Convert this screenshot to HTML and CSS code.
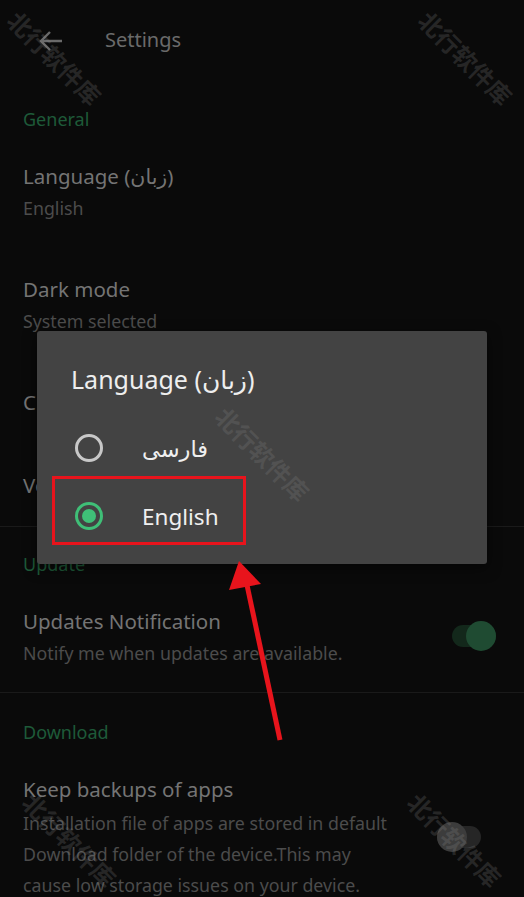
FILE: index.html
```html
<!DOCTYPE html>
<html lang="en">
<head>
    <meta charset="UTF-8">
    <meta name="viewport" content="width=device-width, initial-scale=1.0">
    <title>Settings</title>
    <link rel="stylesheet" href="styles.css">
</head>
<body>
    <div class="screen">
        <header class="topbar">
            <svg class="back" width="26" height="24" viewBox="0 0 26 24">
                <path d="M24 12H3M12 3L3 12l9 9" fill="none" stroke="#6a6a6a" stroke-width="2.4"/>
            </svg>
            <h1>Settings</h1>
        </header>

        <section class="group">
            <h2>General</h2>
            <div class="item">
                <div class="texts">
                    <div class="title">Language (زبان)</div>
                    <div class="sub">English</div>
                </div>
            </div>
            <div class="item">
                <div class="texts">
                    <div class="title">Dark mode</div>
                    <div class="sub">System selected</div>
                </div>
            </div>
            <div class="item">
                <div class="texts">
                    <div class="title">Clear cache</div>
                </div>
            </div>
            <div class="item">
                <div class="texts">
                    <div class="title">Version</div>
                </div>
            </div>
        </section>

        <section class="group">
            <h2>Update</h2>
            <div class="item">
                <div class="texts">
                    <div class="title">Updates Notification</div>
                    <div class="sub">Notify me when updates are available.</div>
                </div>
                <span class="switch on"><span class="knob"></span></span>
            </div>
        </section>

        <section class="group last">
            <h2>Download</h2>
            <div class="item">
                <div class="texts narrow">
                    <div class="title">Keep backups of apps</div>
                    <div class="sub long">Installation file of apps are stored in default Download folder of the device.This may cause low storage issues on your device.</div>
                </div>
                <span class="switch off"><span class="knob"></span></span>
            </div>
        </section>

        <div class="dialog">
            <div class="dialog-title">Language (زبان)</div>
            <div class="option">
                <span class="radio"></span>
                <span class="label">فارسی</span>
            </div>
            <div class="option">
                <span class="radio checked"></span>
                <span class="label">English</span>
            </div>
        </div>

        <div class="mark-box"></div>
        <svg class="arrow" width="524" height="897" viewBox="0 0 524 897">
            <line x1="280" y1="740" x2="247" y2="585" stroke="#e8141c" stroke-width="5"/>
            <polygon points="239,561 229,590 261,584" fill="#e8141c"/>
        </svg>

        <div class="wm wm1">北行软件库</div>
        <div class="wm wm2">北行软件库</div>
        <div class="wm wm3">北行软件库</div>
        <div class="wm wm4">北行软件库</div>
        <div class="wm wm5">北行软件库</div>
    </div>
</body>
</html>
```

FILE: styles.css
```css
body {
    margin: 0;
    background: #0a0a0a;
    font-family: "Noto Sans", "DejaVu Sans", sans-serif;
}

.screen {
    position: relative;
    width: 524px;
    height: 897px;
    overflow: hidden;
    background: #0a0a0a;
}

.topbar {
    height: 80px;
    display: flex;
    align-items: center;
    padding-left: 38px;
    gap: 41px;
}

.topbar h1 {
    margin: 0;
    font-size: 20px;
    font-weight: normal;
    color: #6a6a6a;
    margin-top: -2px;
}

.back {
    display: block;
    margin-top: 2px;
}

.group {
    border-bottom: 1px solid #1a1a1a;
}

.group.last {
    border-bottom: none;
}

.group h2 {
    margin: 0;
    padding: 27px 23px 3px;
    font-size: 18px;
    line-height: 24px;
    font-weight: normal;
    color: #1e5a39;
}

.group + .group h2 {
    padding-top: 25px;
}

.group.last h2 {
    padding-top: 27px;
}

.item {
    display: flex;
    align-items: center;
    justify-content: space-between;
    padding: 25px 28px 24px 23px;
}

.texts.narrow {
    width: 378px;
}

.title {
    font-size: 20.5px;
    line-height: 34px;
    color: #747474;
}

.sub {
    font-size: 17.8px;
    line-height: 30px;
    color: #4c4c4c;
}

.sub.long {
    line-height: 31px;
    margin-top: 2px;
}

/* switches */
.switch {
    position: relative;
    width: 44px;
    height: 30px;
    flex-shrink: 0;
}

.switch::before {
    content: "";
    position: absolute;
    left: 0;
    right: 0;
    top: 4px;
    height: 22px;
    border-radius: 11px;
}

.switch .knob {
    position: absolute;
    top: 0;
    width: 30px;
    height: 30px;
    border-radius: 50%;
}

.switch.on::before {
    background: #13281b;
}

.switch.on .knob {
    right: 0;
    background: #1f4b32;
}

.switch.off {
    margin-right: 15px;
}

.switch.off::before {
    background: #262626;
}

.switch.off .knob {
    left: 0;
    background: #3c3c3c;
}

/* dialog */
.dialog {
    position: absolute;
    left: 37px;
    top: 331px;
    width: 450px;
    height: 233px;
    background: #434343;
    border-radius: 3px;
    box-shadow: 0 4px 14px rgba(0, 0, 0, 0.5);
}

.dialog-title {
    padding: 32px 0 0 34px;
    font-size: 25px;
    line-height: 32px;
    color: #eeeeee;
}

.option {
    display: flex;
    align-items: center;
    height: 68px;
    padding-left: 38px;
}

.dialog-title + .option {
    margin-top: 19px;
}

.radio {
    width: 22px;
    height: 22px;
    border: 3px solid #c8c8c8;
    border-radius: 50%;
    position: relative;
    margin-right: 39px;
}

.radio.checked {
    border-color: #3fbf77;
}

.radio.checked::after {
    content: "";
    position: absolute;
    left: 4px;
    top: 4px;
    width: 14px;
    height: 14px;
    border-radius: 50%;
    background: #3fbf77;
}

.label {
    font-size: 22.5px;
    color: #efefef;
}

/* annotations */
.mark-box {
    position: absolute;
    left: 52px;
    top: 476px;
    width: 188px;
    height: 63px;
    border: 3px solid #e8141c;
}

.arrow {
    position: absolute;
    left: 0;
    top: 0;
    pointer-events: none;
}

.wm {
    position: absolute;
    font-family: "Noto Sans CJK SC", sans-serif;
    font-size: 24px;
    font-weight: bold;
    color: rgba(140, 140, 140, 0.22);
    transform: rotate(45deg);
    white-space: nowrap;
    pointer-events: none;
}

.wm1 { left: -5px; top: 40px; }
.wm2 { left: 406px; top: 40px; }
.wm3 { left: 203px; top: 436px; }
.wm4 { left: 10px; top: 822px; }
.wm5 { left: 395px; top: 822px; }
```
